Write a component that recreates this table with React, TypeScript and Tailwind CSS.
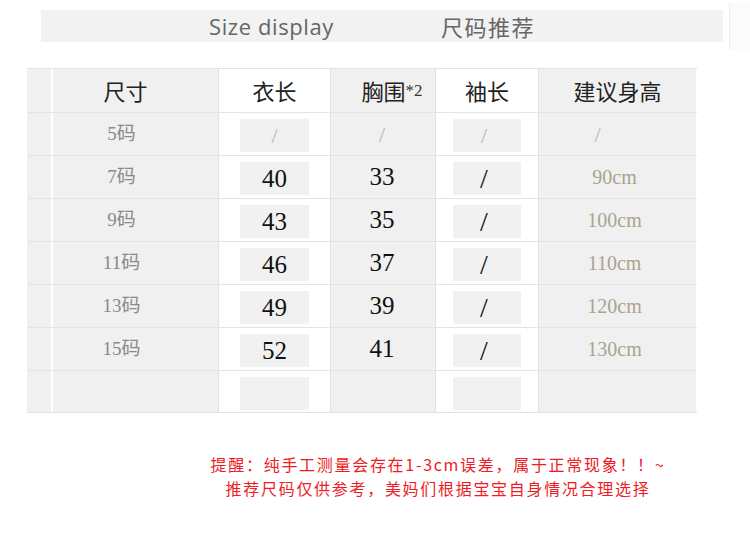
import React from "react";

const serif = { fontFamily: '"Liberation Serif", "Noto Sans CJK SC", serif' };
const sans = { fontFamily: '"Noto Sans CJK SC", "Noto Sans", sans-serif' };

type Row = { size: string; len: string; chest: string; sleeve: string; height: string; dim?: boolean };

const rows: Row[] = [
  { size: "5码", len: "/", chest: "/", sleeve: "/", height: "/", dim: true },
  { size: "7码", len: "40", chest: "33", sleeve: "/", height: "90cm" },
  { size: "9码", len: "43", chest: "35", sleeve: "/", height: "100cm" },
  { size: "11码", len: "46", chest: "37", sleeve: "/", height: "110cm" },
  { size: "13码", len: "49", chest: "39", sleeve: "/", height: "120cm" },
  { size: "15码", len: "52", chest: "41", sleeve: "/", height: "130cm" },
];

function DataRow({ r }: { r: Row }) {
  const dimCls = "text-[#bdb8a5] text-[22px]";
  return (
    <div className="grid grid-cols-[26px_166px_112px_105px_103px_157px] h-[43px] border-t border-[#e4e4e4]">
      <div className="bg-[#f0f0f0] border-r-2 border-white" />
      <div className="bg-[#f0f0f0] flex items-center justify-center pr-[28px] text-[19px] text-[#8a8a8a] border-r border-[#e2e2e2]" style={serif}>
        {r.size}
      </div>
      <div className="bg-white flex items-center justify-center border-r border-[#e2e2e2] pt-[3px]">
        <div className={`w-[69px] h-[33px] bg-[#f1f1f1] flex items-center justify-center ${r.dim ? dimCls : "text-[25px] text-[#111]"}`} style={serif}>
          {r.len}
        </div>
      </div>
      <div className={`bg-[#f0f0f0] flex items-center justify-center pr-[2px] border-r border-[#e2e2e2] ${r.dim ? dimCls : "text-[25px] text-[#111]"}`} style={serif}>
        {r.chest}
      </div>
      <div className="bg-white flex items-center justify-center border-r border-[#e2e2e2] pt-[3px]">
        <div className={`w-[68px] h-[33px] bg-[#f1f1f1] flex items-center justify-center pr-[6px] ${r.dim ? dimCls : "text-[28px] text-[#111] font-light"}`} style={serif}>
          {r.sleeve}
        </div>
      </div>
      <div className={`bg-[#f0f0f0] flex items-center justify-center pr-[6px] ${r.dim ? dimCls + " pr-[40px]" : "text-[20px] text-[#a9a48f]"}`} style={serif}>
        {r.height}
      </div>
    </div>
  );
}

export default function App() {
  return (
    <div className="w-[750px] h-[536px] bg-white overflow-hidden" style={sans}>
      <div className="flex items-start">
        <div className="mt-[10px] ml-[41px] w-[682px] h-[32px] bg-[#f2f2f2] flex items-center pl-[168px] text-[#666]">
          <span className="text-[22px] leading-none tracking-[0.6px]" style={{ fontFamily: '"Open Sans", "Noto Sans", sans-serif' }}>
            Size display
          </span>
          <span className="ml-[107px] text-[22px] leading-none tracking-[1.5px]" style={sans}>
            尺码推荐
          </span>
        </div>
        <div className="ml-[6px] mt-[3px] w-[21px] h-[46px] bg-[#fbfbfb] border-l border-[#eeeeee]" />
      </div>

      <div className="mt-[19px] ml-[27px] w-[670px] border-t border-b border-[#e2e2e2]">
        <div className="grid grid-cols-[26px_166px_112px_105px_103px_157px] h-[43px] text-[22px] text-[#222]">
          <div className="bg-[#f0f0f0] border-r-2 border-white" />
          <div className="bg-[#f0f0f0] flex items-center justify-center pr-[20px] border-r border-[#e2e2e2]">尺寸</div>
          <div className="bg-white flex items-center justify-center border-r border-[#e2e2e2]">衣长</div>
          <div className="bg-[#f0f0f0] flex items-center justify-center pl-[18px] border-r border-[#e2e2e2]">
            胸围<span className="text-[17px] text-[#333]" style={serif}>*2</span>
          </div>
          <div className="bg-white flex items-center justify-center border-r border-[#e2e2e2]">袖长</div>
          <div className="bg-[#f0f0f0] flex items-center justify-center">建议身高</div>
        </div>
        {rows.map((r) => (
          <DataRow key={r.size} r={r} />
        ))}
        <div className="grid grid-cols-[26px_166px_112px_105px_103px_157px] h-[42px] border-t border-[#e4e4e4]">
          <div className="bg-[#f0f0f0] border-r-2 border-white" />
          <div className="bg-[#f0f0f0] border-r border-[#e2e2e2]" />
          <div className="bg-white flex items-center justify-center border-r border-[#e2e2e2] pt-[3px]">
            <div className="w-[69px] h-[33px] bg-[#f1f1f1]" />
          </div>
          <div className="bg-[#f0f0f0] border-r border-[#e2e2e2]" />
          <div className="bg-white flex items-center justify-center border-r border-[#e2e2e2] pt-[3px]">
            <div className="w-[68px] h-[33px] bg-[#f1f1f1]" />
          </div>
          <div className="bg-[#f0f0f0]" />
        </div>
      </div>

      <div className="mt-[39px] pl-[126px] text-center text-[16px] leading-[24px] tracking-[1.7px] text-[#ee1c25]" style={sans}>
        <div>提醒：纯手工测量会存在1-3cm误差，属于正常现象！！~</div>
        <div>推荐尺码仅供参考，美妈们根据宝宝自身情况合理选择</div>
      </div>
    </div>
  );
}
